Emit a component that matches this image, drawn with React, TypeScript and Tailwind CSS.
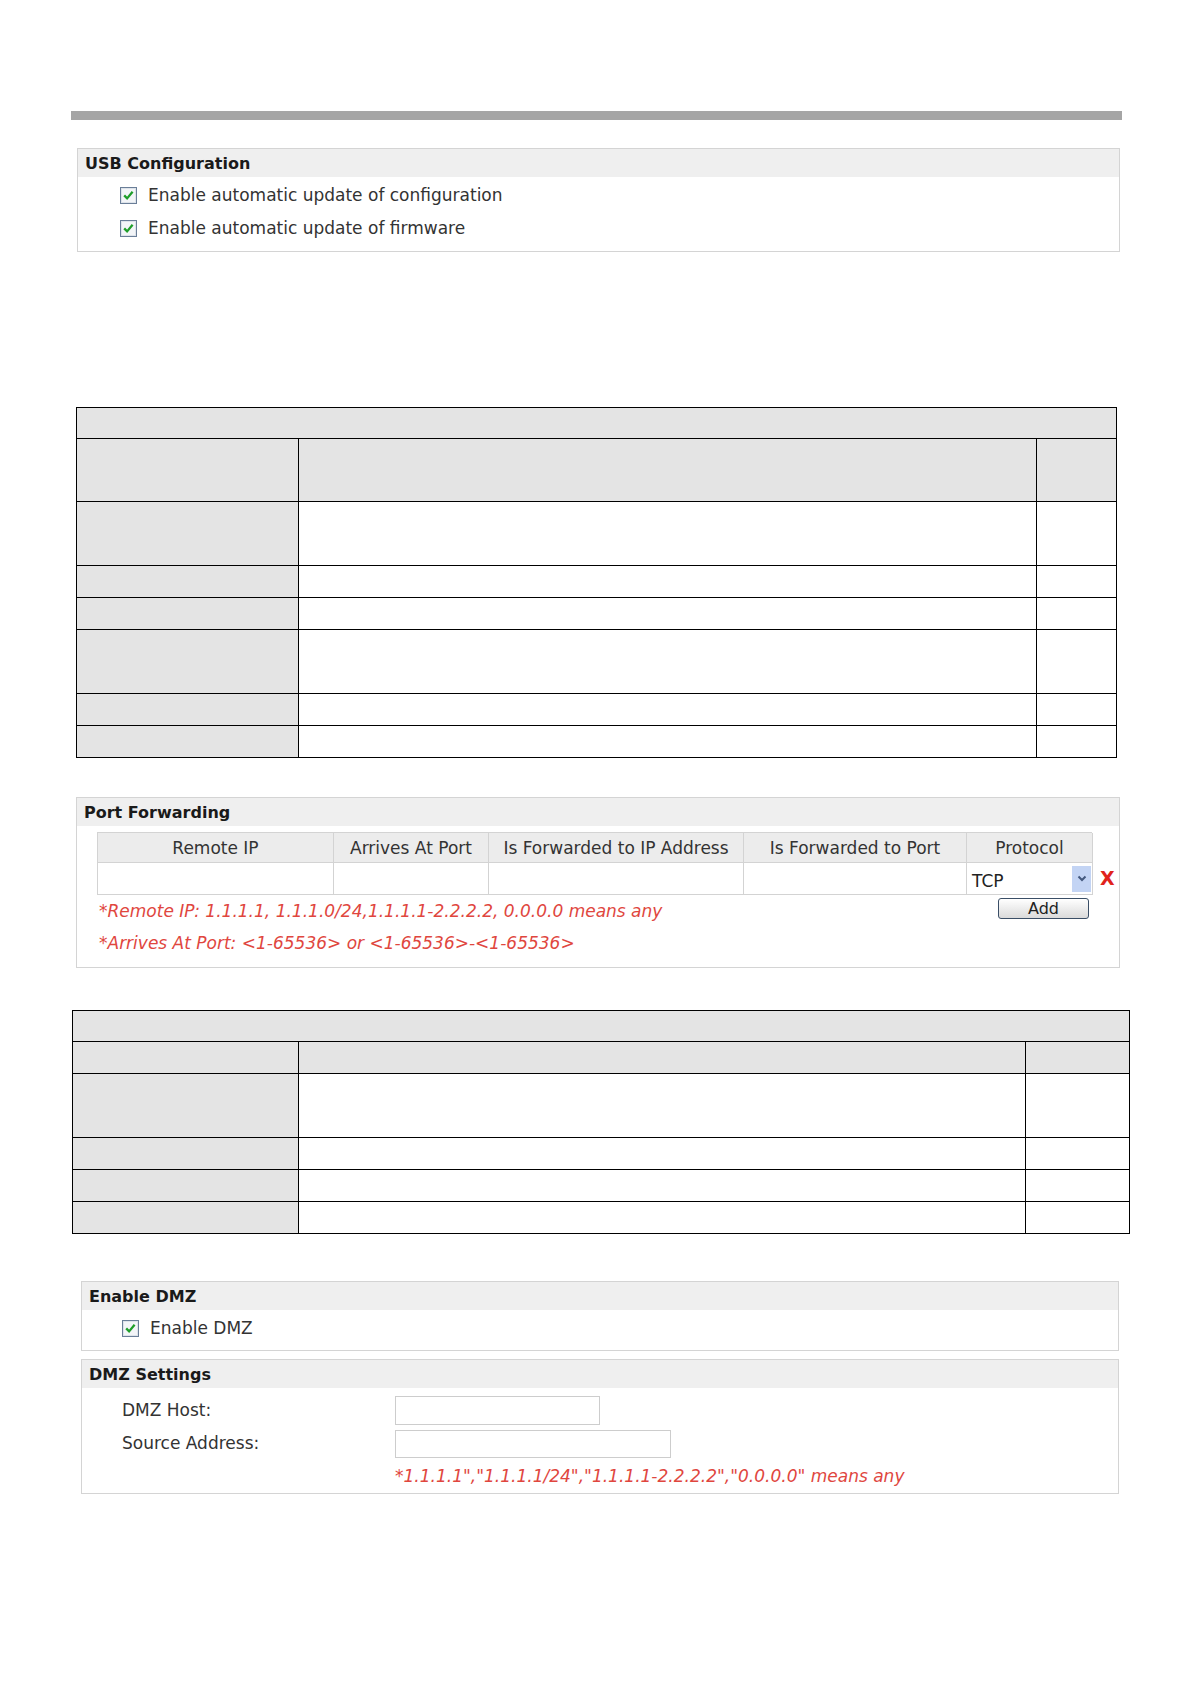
import type { ReactNode } from "react";

const font = "font-['DejaVu_Sans','Verdana',sans-serif]";

type Cell = { gray: boolean; span?: boolean };

const table1: Cell[][] = [
  [{ gray: true, span: true }],
  [{ gray: true }, { gray: true }, { gray: true }],
  [{ gray: true }, { gray: false }, { gray: false }],
  [{ gray: true }, { gray: false }, { gray: false }],
  [{ gray: true }, { gray: false }, { gray: false }],
  [{ gray: true }, { gray: false }, { gray: false }],
  [{ gray: true }, { gray: false }, { gray: false }],
  [{ gray: true }, { gray: false }, { gray: false }],
];

const table2: Cell[][] = [
  [{ gray: true, span: true }],
  [{ gray: true }, { gray: true }, { gray: true }],
  [{ gray: true }, { gray: false }, { gray: false }],
  [{ gray: true }, { gray: false }, { gray: false }],
  [{ gray: true }, { gray: false }, { gray: false }],
  [{ gray: true }, { gray: false }, { gray: false }],
];

function GridTable({ className, rows }: { className: string; rows: Cell[][] }) {
  return (
    <div className={"grid border-l border-t border-black " + className}>
      {rows.flatMap((row, r) =>
        row.map((c, i) => (
          <div
            key={r + "-" + i}
            className={
              (c.span ? "col-span-3 " : "") +
              "border-b border-r border-black " +
              (c.gray ? "bg-[#e4e4e4]" : "bg-white")
            }
          />
        ))
      )}
    </div>
  );
}

function Check() {
  return (
    <svg width="17" height="17" viewBox="0 0 17 17" className="shrink-0">
      <rect x="0.5" y="0.5" width="16" height="16" fill="#f3f5f8" stroke="#6a7e98" />
      <rect x="1.5" y="1.5" width="14" height="14" fill="none" stroke="#dde3ea" />
      <path d="M4.2 8.4 L7.1 11.4 L12.6 4.8" fill="none" stroke="#1f9e2a" strokeWidth="2.3" />
    </svg>
  );
}

function Panel({ title, className, children }: { title: string; className: string; children: ReactNode }) {
  return (
    <section className={"border border-[#d4d4d4] bg-white " + className}>
      <div className="h-[28px] bg-[#efefef] pl-[7px] text-[16px] font-bold leading-[29px] text-[#1a1a1a]">
        {title}
      </div>
      {children}
    </section>
  );
}

function CheckRow({ label }: { label: string }) {
  return (
    <div className="flex h-[33px] items-center gap-[11px]">
      <Check />
      <span>{label}</span>
    </div>
  );
}

const heads = ["Remote IP", "Arrives At Port", "Is Forwarded to IP Address", "Is Forwarded to Port", "Protocol"];

export default function App() {
  return (
    <div className={"min-h-[1684px] w-[1191px] bg-white pt-[111px] text-[17px] text-[#333] " + font}>
      <div className="ml-[71px] h-[9px] w-[1051px] bg-[#a5a5a5]" />

      <Panel title="USB Configuration" className="ml-[77px] mt-[28px] w-[1043px]">
        <div className="pb-[6px] pl-[42px] pt-[2px]">
          <CheckRow label="Enable automatic update of configuration" />
          <CheckRow label="Enable automatic update of firmware" />
        </div>
      </Panel>

      <GridTable
        className="ml-[76px] mt-[155px] w-[1041px] grid-cols-[222px_738px_80px] grid-rows-[31px_63px_64px_32px_32px_64px_32px_32px]"
        rows={table1}
      />

      <Panel title="Port Forwarding" className="ml-[76px] mt-[39px] w-[1044px]">
        <div className="ml-[20px] mt-[6px] pb-[8px]">
          <div className="flex">
            <div className="grid w-[995px] grid-cols-[236px_155px_255px_223px_126px] grid-rows-[30px_32px] border-l border-t border-[#d3d3d3]">
              {heads.map((h) => (
                <div
                  key={h}
                  className="border-b border-r border-[#d3d3d3] bg-[#ececec] text-center leading-[30px] text-[#333]"
                >
                  {h}
                </div>
              ))}
              {heads.slice(0, 4).map((h) => (
                <div key={h + "-in"} className="border-b border-r border-[#d3d3d3] bg-white" />
              ))}
              <div className="flex items-center justify-between border-b border-r border-[#d3d3d3] bg-white pl-[5px]">
                <span className="pt-[6px] text-[#222]">TCP</span>
                <span className="mr-[1px] flex h-[26px] w-[19px] items-center justify-center bg-[#c3d4f4]">
                  <svg width="10" height="7" viewBox="0 0 10 7">
                    <path d="M1.5 1.5 L5 5 L8.5 1.5" fill="none" stroke="#44597e" strokeWidth="2" />
                  </svg>
                </span>
              </div>
            </div>
            <div className="pt-[30px]">
              <span className="ml-[8px] flex h-[32px] items-center text-[19px] font-bold text-[#e0231c]">X</span>
            </div>
          </div>
          <div className="flex w-[995px] items-start justify-between">
            <p className="pl-[2px] italic leading-[32px] text-[#e0463e]">
              *Remote IP: 1.1.1.1, 1.1.1.0/24,1.1.1.1-2.2.2.2, 0.0.0.0 means any
            </p>
            <button className="mr-[3px] mt-[3px] h-[21px] w-[91px] rounded-[3px] border border-[#3a4e66] bg-linear-to-b from-white to-[#dadada] text-[16px] leading-[19px] text-[#222]">
              Add
            </button>
          </div>
          <p className="pl-[2px] italic leading-[32px] text-[#e0463e]">
            *Arrives At Port: &lt;1-65536&gt; or &lt;1-65536&gt;-&lt;1-65536&gt;
          </p>
        </div>
      </Panel>

      <GridTable
        className="ml-[72px] mt-[42px] w-[1058px] grid-cols-[226px_727px_104px] grid-rows-[31px_32px_64px_32px_32px_32px]"
        rows={table2}
      />

      <Panel title="Enable DMZ" className="ml-[81px] mt-[47px] w-[1038px]">
        <div className="pb-[5px] pl-[40px] pt-[2px]">
          <CheckRow label="Enable DMZ" />
        </div>
      </Panel>

      <Panel title="DMZ Settings" className="ml-[81px] mt-[8px] w-[1038px]">
        <div className="pb-[7px] pl-[40px] pt-[8px]">
          <div className="flex h-[29px] items-center">
            <span className="w-[273px]">DMZ Host:</span>
            <div className="h-[29px] w-[205px] border border-[#cdcdcd] bg-white" />
          </div>
          <div className="mt-[5px] flex h-[28px] items-center">
            <span className="w-[273px]">Source Address:</span>
            <div className="h-[28px] w-[276px] border border-[#cdcdcd] bg-white" />
          </div>
          <p className="ml-[273px] mt-[8px] italic leading-[20px] text-[#e0463e]">
            *1.1.1.1","1.1.1.1/24","1.1.1.1-2.2.2.2","0.0.0.0" means any
          </p>
        </div>
      </Panel>
    </div>
  );
}
